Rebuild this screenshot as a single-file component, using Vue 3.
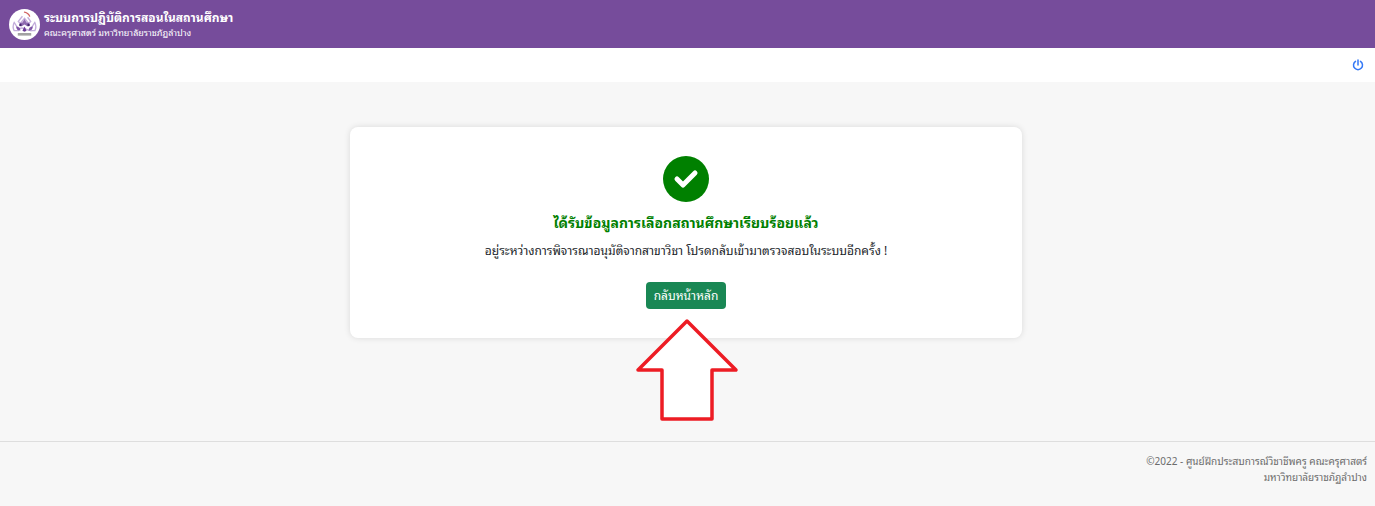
<script setup>
const title = 'ระบบการปฏิบัติการสอนในสถานศึกษา'
const faculty = 'คณะครุศาสตร์ มหาวิทยาลัยราชภัฏลำปาง'
</script>

<template>
  <div class="page">
    <header class="brand">
      <svg class="crest" viewBox="0 0 30 30" aria-hidden="true">
        <circle cx="15" cy="15" r="15" fill="#fff" />
        <path d="M15 3q4 1 5 4" fill="none" stroke="#d0605f" stroke-width="1.200" stroke-linecap="round" />
        <g fill="none" stroke="#c3addb" stroke-width="1.300">
          <path d="M13 7l-4 5 2 2 4-5 4 5 2-2-3-4" />
          <path d="M5 13q-2 4 0 8h4q-1-4-4-8zM25 13q2 4 0 8h-4q1-4 4-8z" />
          <path d="M8 21q3-4 7-2t7 2" />
        </g>
        <g fill="#6a3b96">
          <path d="M15 10l2 3 3 1-2 3-3-2-3 2-2-3 3-1z" opacity=".75" />
          <path d="M7 17q4 0 4 4-4 0-4-4zM23 17q-4 0-4 4 4 0 4-4z" opacity=".8" />
          <path d="M15 17l2 4-2 1-2-1z" />
        </g>
        <circle cx="11" cy="15.500" r="1.200" fill="#43246b" />
        <circle cx="19" cy="15.500" r="1.200" fill="#43246b" />
        <path d="M8.500 24.500h13" stroke="#a2a2a2" stroke-width="2.500" />
      </svg>
      <div class="names">
        <h1>{{ title }}</h1>
        <p>{{ faculty }}</p>
      </div>
    </header>
    <nav class="bar">
      <a href="#" class="power" aria-label="ออกจากระบบ">
        <svg viewBox="0 0 12 12" aria-hidden="true">
          <path d="M3.500 2.400a4.500 4.500 0 1 0 5 0M6 1v5" fill="none" stroke="#3478f6" stroke-width="1.500" stroke-linecap="round" />
        </svg>
      </a>
    </nav>
    <main>
      <section class="card">
        <svg class="check" viewBox="0 0 46 46" aria-hidden="true">
          <circle cx="23" cy="23" r="23" fill="#008000" />
          <path d="M14 23l6 6 12-12" fill="none" stroke="#fff" stroke-width="5" stroke-linecap="round" stroke-linejoin="round" />
        </svg>
        <h2>ได้รับข้อมูลการเลือกสถานศึกษาเรียบร้อยแล้ว</h2>
        <p>อยู่ระหว่างการพิจารณาอนุมัติจากสาขาวิชา โปรดกลับเข้ามาตรวจสอบในระบบอีกครั้ง !</p>
        <div class="action">
          <button type="button">กลับหน้าหลัก</button>
          <svg class="arrow" viewBox="0 0 104 104" aria-hidden="true">
            <path d="M52 3L101 52H77V101H27V52H3Z" fill="#fff" stroke="#ed1c24" stroke-width="3.500" stroke-linejoin="round" />
          </svg>
        </div>
      </section>
    </main>
    <footer>
      <p>©2022 - ศูนย์ฝึกประสบการณ์วิชาชีพครู คณะครุศาสตร์<br>มหาวิทยาลัยราชภัฏลำปาง</p>
    </footer>
  </div>
</template>

<style>
body {
  margin: 0;
  background: #f7f7f7;
}
</style>

<style scoped>
.page {
  display: flex;
  flex-direction: column;
  min-height: 100vh;
  font-family: "Noto Sans Thai Looped", "Noto Sans", sans-serif;
  color: #212529;
}
h1, h2, p {
  margin: 0;
}
.brand {
  display: flex;
  align-items: center;
  gap: 4px;
  box-sizing: border-box;
  min-height: 48px;
  padding: 0 9px;
  background: #764c9b;
  color: #fff;
}
.crest {
  width: 31px;
  height: 31px;
}
.names h1 {
  font-size: 12px;
  line-height: 16px;
}
.names p {
  font-size: 9px;
  line-height: 14px;
}
.bar {
  display: flex;
  align-items: center;
  justify-content: flex-end;
  height: 34px;
  padding: 0 11px;
  background: #fff;
}
.power, .power svg {
  display: block;
  width: 12px;
  height: 12px;
}
main {
  flex: 1;
  padding: 45px 27px 103px 24px;
}
.card {
  display: flex;
  flex-direction: column;
  align-items: center;
  box-sizing: border-box;
  max-width: 672px;
  margin: 0 auto;
  padding: 29px 16px;
  border-radius: 8px;
  background: #fff;
  box-shadow: 0 0 6px rgba(0, 0, 0, 0.12);
  text-align: center;
}
.check {
  width: 46px;
  height: 46px;
}
.card h2 {
  margin-top: 8px;
  color: #008000;
  font-size: 14px;
  line-height: 24px;
}
.card p {
  margin-top: 4px;
  font-size: 12px;
  line-height: 24px;
}
.action {
  position: relative;
  margin-top: 20px;
}
button {
  display: block;
  height: 27px;
  padding: 0 8px 2px;
  border: 0;
  border-radius: 4px;
  background: #198754;
  color: #fff;
  font-family: inherit;
  font-size: 12px;
  line-height: 20px;
}
.arrow {
  position: absolute;
  top: 36px;
  left: calc(50% - 51px);
  width: 104px;
  height: 104px;
  pointer-events: none;
}
footer {
  padding: 11px 8px 21px;
  border-top: 1px solid #dedede;
  color: #6c6c6c;
  text-align: right;
  font-size: 10px;
  line-height: 16px;
}
</style>
